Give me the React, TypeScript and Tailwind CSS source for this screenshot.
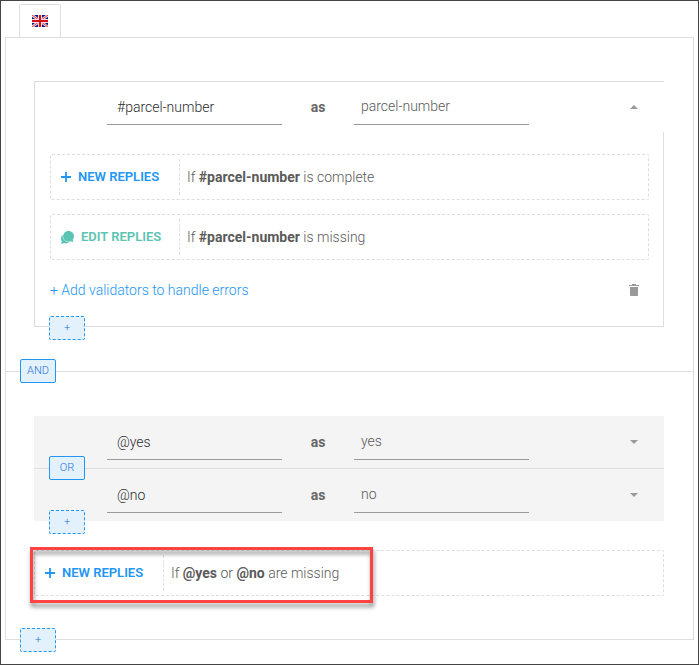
import type { ReactNode } from "react";

function Flag() {
  return (
    <svg viewBox="0 0 16 12" className="h-3 w-4" aria-hidden="true">
      <rect width="16" height="12" fill="#0a1a78" />
      <path d="M0 0L16 12M16 0L0 12" stroke="#f3dfe3" strokeWidth="2.6" />
      <path d="M0 0L16 12M16 0L0 12" stroke="#dc3a48" strokeWidth="1" />
      <path d="M8 0V12M0 6H16" stroke="#f6dcdc" strokeWidth="4" />
      <path d="M8 0V12M0 6H16" stroke="#d4101c" strokeWidth="2" />
    </svg>
  );
}

function Caret({ up = false }: { up?: boolean }) {
  return (
    <svg viewBox="0 0 8 4" className="h-1 w-2 fill-[#9a9a9a]" aria-hidden="true">
      <path d={up ? "M0 4L4 0L8 4Z" : "M0 0L4 4L8 0Z"} />
    </svg>
  );
}

function PlusIcon() {
  return (
    <svg viewBox="0 0 10 10" className="h-[10px] w-[10px] fill-[#2196f3]" aria-hidden="true">
      <path d="M4.100 0h1.800v4.100H10v1.800H5.900V10H4.100V5.900H0V4.100h4.100z" />
    </svg>
  );
}

function ChatIcon() {
  return (
    <svg viewBox="0 0 13 13" className="h-[13px] w-[13px] fill-[#5bc4b2]" aria-hidden="true">
      <path d="M7.600 0C10.700 0 13 2.300 13 5.200c0 1.500-.5 2.700-1.300 3.600l.8 2.300-2.700-.9c-.7.3-1.400.5-2.200.5C4.500 10.700 2.100 8.400 2.100 5.300S4.500 0 7.600 0z" />
      <path d="M1.600 3.800C1.200 8.100 4 11.200 8.300 11.300c-1.400 1.100-3.400 1.400-5.200.8L.1 12.900l.7-2.700C-.5 8.200-.2 5.500 1.600 3.800z" />
    </svg>
  );
}

function TrashIcon() {
  return (
    <svg viewBox="0 0 10 12" className="h-3 w-[10px] fill-[#9a9a9a]" aria-hidden="true">
      <path d="M3 0h4v1h3v1H0V1h3zM1 3h8v8.200a.8.8 0 0 1-.8.8H1.800a.8.8 0 0 1-.8-.8z" />
    </svg>
  );
}

function Badge({ children, dashed = false, place, label }: { children: string; dashed?: boolean; place: string; label?: string }) {
  return (
    <button
      aria-label={label}
      className={`absolute flex h-6 w-9 items-center justify-center rounded-[2px] border border-[#2196f3] bg-[#e3f1fd] text-[11px] leading-4 font-light text-[#1f74d8] ${dashed ? "border-dashed" : ""} ${place}`}
    >
      {children}
    </button>
  );
}

function ParamRow({ entity, name, open = false }: { entity: string; name: string; open?: boolean }) {
  return (
    <div className="flex h-full items-center">
      <input
        aria-label="Entity"
        defaultValue={entity}
        className="h-9 w-[175px] border-b border-[#9a9a9a] bg-transparent px-[10px] font-light text-[#2c2c2c] outline-none"
      />
      <span className="w-[72px] text-center font-bold text-[#666]">as</span>
      <input
        aria-label="Parameter name"
        defaultValue={name}
        className="h-9 w-[175px] border-b border-[#9a9a9a] bg-transparent px-[7px] pb-0.5 font-light text-[#5a5a5a] outline-none"
      />
      <button aria-label={open ? "Collapse" : "Expand"} className="mr-[18px] ml-auto flex h-6 w-6 items-center justify-center">
        <Caret up={open} />
      </button>
    </div>
  );
}

function ReplyBox({ edit = false, children }: { edit?: boolean; children: ReactNode }) {
  return (
    <div className="flex h-[46px] items-center rounded-[2px] border border-dashed border-[#dedede]">
      <button
        className={`flex h-9 w-[129px] items-center gap-[7px] border-r border-dashed border-[#dedede] pl-[10px] text-[13px] font-semibold ${edit ? "text-[#5bc4b2]" : "text-[#2196f3]"}`}
      >
        {edit ? <ChatIcon /> : <PlusIcon />}
        {edit ? "EDIT REPLIES" : "NEW REPLIES"}
      </button>
      <p className="pl-[7px] font-light text-[#5a5a5a]">{children}</p>
    </div>
  );
}

export default function App() {
  return (
    <main className="min-h-screen border border-[#444] bg-white px-1 pt-[3px] pb-6 font-[Roboto,sans-serif] text-sm leading-5">
      <button
        aria-label="English"
        className="ml-[14px] flex h-[33px] w-[42px] items-center justify-center rounded-t-[2px] border border-b-0 border-[#dedede]"
      >
        <Flag />
      </button>

      <section className="relative border border-[#dedede] pt-[43px] pr-[29px] pb-11 pl-7">
        <div className="relative border-t border-l border-[#dedede]">
          <div className="h-[50px] pl-[72px]">
            <ParamRow entity="#parcel-number" name="parcel-number" open />
          </div>
          <div className="border-r border-b border-[#dedede] pt-[22px] pr-[14px] pb-5 pl-[15px]">
            <div className="flex flex-col gap-[14px]">
              <ReplyBox>
                If <b className="font-bold">#parcel-number</b> is complete
              </ReplyBox>
              <ReplyBox edit>
                If <b className="font-bold">#parcel-number</b> is missing
              </ReplyBox>
              <div className="flex h-8 items-center justify-between pr-[10px]">
                <button className="font-light text-[#2196f3]">+ Add validators to handle errors</button>
                <button aria-label="Delete">
                  <TrashIcon />
                </button>
              </div>
            </div>
          </div>
          <Badge dashed label="Add alternative" place="left-[14px] -bottom-[13px]">+</Badge>
        </div>
        <Badge place="left-[14px] -bottom-3">AND</Badge>
      </section>

      <section className="relative border border-t-0 border-[#dedede] pt-11 pr-[29px] pb-[43px] pl-7">
        <div className="relative bg-[#f4f4f4]">
          <div className="relative h-[53px] border-b border-[#dedede] pl-[73px]">
            <ParamRow entity="@yes" name="yes" />
            <Badge place="left-[15px] -bottom-3">OR</Badge>
          </div>
          <div className="h-[52px] pl-[73px]">
            <ParamRow entity="@no" name="no" />
          </div>
          <Badge dashed label="Add alternative" place="left-[15px] -bottom-[13px]">+</Badge>
        </div>
        <div className="relative mt-[29px]">
          <ReplyBox>
            If <b className="font-bold">@yes</b> or <b className="font-bold">@no</b> are missing
          </ReplyBox>
          <div className="pointer-events-none absolute -top-[3px] -left-1 h-14 w-[343px] border-3 border-[#ff4343] drop-shadow-[1px_4px_2px_rgba(0,0,0,0.45)]" />
        </div>
        <Badge dashed label="Add condition" place="left-[14px] -bottom-[13px]">+</Badge>
      </section>
    </main>
  );
}
